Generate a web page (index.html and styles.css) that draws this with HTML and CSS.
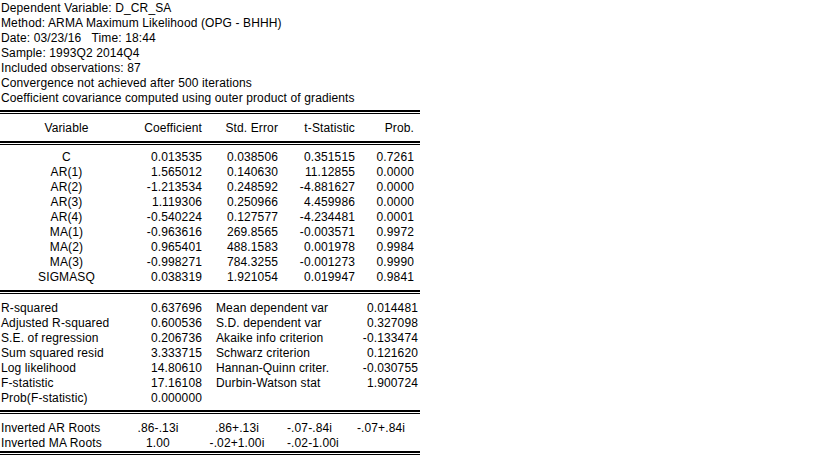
FILE: index.html
```html
<!DOCTYPE html>
<html>
<head>
<meta charset="utf-8">
<link rel="stylesheet" href="styles.css">
</head>
<body>
<div class="report">
  <div class="info">
    <div>Dependent Variable: D_CR_SA</div>
    <div>Method: ARMA Maximum Likelihood (OPG - BHHH)</div>
    <div class="pre">Date: 03/23/16   Time: 18:44</div>
    <div>Sample: 1993Q2 2014Q4</div>
    <div>Included observations: 87</div>
    <div>Convergence not achieved after 500 iterations</div>
    <div>Coefficient covariance computed using outer product of gradients</div>
  </div>
  <div class="dbl"></div>
  <div class="coef head">
    <span class="c">Variable</span><span class="r">Coefficient</span><span class="r">Std. Error</span><span class="r">t-Statistic</span><span class="r">Prob.</span>
  </div>
  <div class="dbl"></div>
  <div class="body">
    <div class="coef"><span class="c">C</span><span class="r">0.013535</span><span class="r">0.038506</span><span class="r">0.351515</span><span class="r">0.7261</span></div>
    <div class="coef"><span class="c">AR(1)</span><span class="r">1.565012</span><span class="r">0.140630</span><span class="r">11.12855</span><span class="r">0.0000</span></div>
    <div class="coef"><span class="c">AR(2)</span><span class="r">-1.213534</span><span class="r">0.248592</span><span class="r">-4.881627</span><span class="r">0.0000</span></div>
    <div class="coef"><span class="c">AR(3)</span><span class="r">1.119306</span><span class="r">0.250966</span><span class="r">4.459986</span><span class="r">0.0000</span></div>
    <div class="coef"><span class="c">AR(4)</span><span class="r">-0.540224</span><span class="r">0.127577</span><span class="r">-4.234481</span><span class="r">0.0001</span></div>
    <div class="coef"><span class="c">MA(1)</span><span class="r">-0.963616</span><span class="r">269.8565</span><span class="r">-0.003571</span><span class="r">0.9972</span></div>
    <div class="coef"><span class="c">MA(2)</span><span class="r">0.965401</span><span class="r">488.1583</span><span class="r">0.001978</span><span class="r">0.9984</span></div>
    <div class="coef"><span class="c">MA(3)</span><span class="r">-0.998271</span><span class="r">784.3255</span><span class="r">-0.001273</span><span class="r">0.9990</span></div>
    <div class="coef"><span class="c">SIGMASQ</span><span class="r">0.038319</span><span class="r">1.921054</span><span class="r">0.019947</span><span class="r">0.9841</span></div>
  </div>
  <div class="dbl"></div>
  <div class="stats">
    <div class="st"><span>R-squared</span><span class="r">0.637696</span><span>Mean dependent var</span><span class="r">0.014481</span></div>
    <div class="st"><span>Adjusted R-squared</span><span class="r">0.600536</span><span>S.D. dependent var</span><span class="r">0.327098</span></div>
    <div class="st"><span>S.E. of regression</span><span class="r">0.206736</span><span>Akaike info criterion</span><span class="r">-0.133474</span></div>
    <div class="st"><span>Sum squared resid</span><span class="r">3.333715</span><span>Schwarz criterion</span><span class="r">0.121620</span></div>
    <div class="st"><span>Log likelihood</span><span class="r">14.80610</span><span>Hannan-Quinn criter.</span><span class="r">-0.030755</span></div>
    <div class="st"><span>F-statistic</span><span class="r">17.16108</span><span>Durbin-Watson stat</span><span class="r">1.900724</span></div>
    <div class="st"><span>Prob(F-statistic)</span><span class="r">0.000000</span><span></span><span></span></div>
  </div>
  <div class="dbl"></div>
  <div class="roots">
    <div class="rt"><span>Inverted AR Roots</span><span class="c">.86-.13i</span><span class="c">.86+.13i</span><span>-.07-.84i</span><span class="c">-.07+.84i</span></div>
    <div class="rt"><span>Inverted MA Roots</span><span class="c">1.00</span><span class="c">-.02+1.00i</span><span>-.02-1.00i</span><span></span></div>
  </div>
  <div class="dbl"></div>
</div>
</body>
</html>
```

FILE: styles.css
```css
html, body {
  margin: 0;
  padding: 0;
  background: #ffffff;
}
body {
  font-family: "Liberation Sans", Arial, sans-serif;
  font-size: 12px;
  line-height: 15px;
  letter-spacing: 0.12px;
  color: #000000;
}
.report {
  width: 420px;
}
.info {
  padding: 1px 0 0 1px;
}
.pre {
  white-space: pre;
}
.dbl {
  height: 1px;
  border-top: 2px solid #000;
  border-bottom: 1px solid #000;
}
.info + .dbl {
  margin-top: 4px;
}
.coef {
  display: grid;
  grid-template-columns: 133px 69px 76px 77px 59px;
}
.head {
  padding: 7px 0 5px;
}
.body {
  padding: 5px 0 5px;
}
.c {
  text-align: center;
}
.r {
  text-align: right;
}
.stats {
  padding: 7px 0 4px 1px;
}
.st {
  display: grid;
  grid-template-columns: 110px 91px 14px 120px 82px;
}
.st span {
  white-space: nowrap;
}
.st span:nth-child(3) {
  grid-column: 4 / 5;
}
.st span:nth-child(4) {
  grid-column: 5 / 6;
}
.roots {
  padding: 7px 0 0 1px;
}
.rt {
  display: grid;
  grid-template-columns: 119px 76px 82px 76px 54px;
}
.rt span {
  white-space: nowrap;
}
.rt span:nth-child(4) {
  padding-left: 9px;
}
```
